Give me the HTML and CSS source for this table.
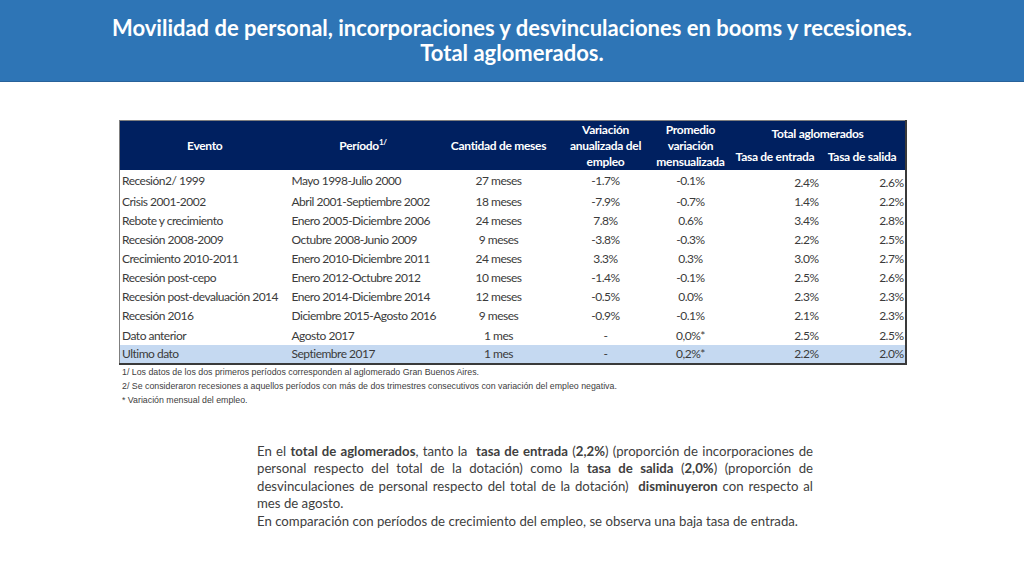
FILE: index.html
```html
<!DOCTYPE html>
<html lang="es">
<head>
<meta charset="utf-8">
<link rel="stylesheet" href="styles.css">
</head>
<body>
<header class="band">
  <h1 class="title">Movilidad de personal, incorporaciones y desvinculaciones en booms y recesiones.<br>Total aglomerados.</h1>
</header>
<main class="content">
  <section class="tablebox">
    <table class="data">
      <colgroup>
        <col class="c1"><col class="c2"><col class="c3"><col class="c4"><col class="c5"><col class="c6"><col class="c7">
      </colgroup>
      <thead>
        <tr class="h1">
          <th rowspan="2">Evento</th>
          <th rowspan="2">Período<sup>1/</sup></th>
          <th rowspan="2">Cantidad de meses</th>
          <th rowspan="2" class="multi">Variación anualizada del empleo</th>
          <th rowspan="2" class="multi">Promedio variación mensualizada</th>
          <th colspan="2" class="grp">Total aglomerados</th>
        </tr>
        <tr class="h2">
          <th class="sub">Tasa de entrada</th>
          <th class="sub">Tasa de salida</th>
        </tr>
      </thead>
      <tbody>
        <tr class="first"><td>Recesión2/ 1999</td><td>Mayo 1998-Julio 2000</td><td class="ctr">27 meses</td><td class="ctr">-1.7%</td><td class="ctr">-0.1%</td><td class="rt low">2.4%</td><td class="rt low">2.6%</td></tr>
        <tr><td>Crisis 2001-2002</td><td>Abril 2001-Septiembre 2002</td><td class="ctr">18 meses</td><td class="ctr">-7.9%</td><td class="ctr">-0.7%</td><td class="rt">1.4%</td><td class="rt">2.2%</td></tr>
        <tr><td>Rebote y crecimiento</td><td>Enero 2005-Diciembre 2006</td><td class="ctr">24 meses</td><td class="ctr">7.8%</td><td class="ctr">0.6%</td><td class="rt">3.4%</td><td class="rt">2.8%</td></tr>
        <tr><td>Recesión 2008-2009</td><td>Octubre 2008-Junio 2009</td><td class="ctr">9 meses</td><td class="ctr">-3.8%</td><td class="ctr">-0.3%</td><td class="rt">2.2%</td><td class="rt">2.5%</td></tr>
        <tr><td>Crecimiento 2010-2011</td><td>Enero 2010-Diciembre 2011</td><td class="ctr">24 meses</td><td class="ctr">3.3%</td><td class="ctr">0.3%</td><td class="rt">3.0%</td><td class="rt">2.7%</td></tr>
        <tr><td>Recesión post-cepo</td><td>Enero 2012-Octubre 2012</td><td class="ctr">10 meses</td><td class="ctr">-1.4%</td><td class="ctr">-0.1%</td><td class="rt">2.5%</td><td class="rt">2.6%</td></tr>
        <tr><td>Recesión post-devaluación 2014</td><td>Enero 2014-Diciembre 2014</td><td class="ctr">12 meses</td><td class="ctr">-0.5%</td><td class="ctr">0.0%</td><td class="rt">2.3%</td><td class="rt">2.3%</td></tr>
        <tr><td>Recesión 2016</td><td>Diciembre 2015-Agosto 2016</td><td class="ctr">9 meses</td><td class="ctr">-0.9%</td><td class="ctr">-0.1%</td><td class="rt">2.1%</td><td class="rt">2.3%</td></tr>
        <tr><td>Dato anterior</td><td>Agosto 2017</td><td class="ctr">1 mes</td><td class="ctr">-</td><td class="ctr">0,0%*</td><td class="rt">2.5%</td><td class="rt">2.5%</td></tr>
        <tr class="last"><td>Ultimo dato</td><td>Septiembre 2017</td><td class="ctr">1 mes</td><td class="ctr">-</td><td class="ctr">0,2%*</td><td class="rt">2.2%</td><td class="rt">2.0%</td></tr>
      </tbody>
    </table>
    <ul class="notes">
      <li>1/ Los datos de los dos primeros períodos corresponden al aglomerado Gran Buenos Aires.</li>
      <li>2/ Se consideraron recesiones a aquellos períodos con más de dos trimestres consecutivos con variación del empleo negativa.</li>
      <li>* Variación mensual del empleo.</li>
    </ul>
  </section>
  <section class="summary">
    <p>En el <b>total de aglomerados</b>, tanto la&nbsp; <b>tasa de entrada</b> (<b>2,2%</b>) (proporción de incorporaciones de personal respecto del total de la dotación) como la <b>tasa de salida</b> (<b>2,0%</b>) (proporción de desvinculaciones de personal respecto del total de la dotación)&nbsp; <b>disminuyeron</b> con respecto al mes de agosto.</p>
    <p>En comparación con períodos de crecimiento del empleo, se observa una baja tasa de entrada.</p>
  </section>
</main>
</body>
</html>
```

FILE: styles.css
```css
html, body {
  margin: 0;
  padding: 0;
  background: #ffffff;
}

body {
  width: 1024px;
  height: 576px;
  overflow: hidden;
  font-family: Lato, "Open Sans", sans-serif;
  color: #3b3b3b;
}

.band {
  height: 82px;
  background: #2e75b6;
  border-bottom: 1px solid #28629a;
  box-sizing: border-box;
  padding-top: 15px;
}

.title {
  margin: 0;
  text-align: center;
  color: #ffffff;
  font-size: 22px;
  line-height: 25px;
  font-weight: 700;
}

.content {
  display: flex;
  flex-direction: column;
  align-items: center;
}

.tablebox {
  margin-top: 38px;
  width: 786px;
}

.data {
  width: 786px;
  border-collapse: collapse;
  table-layout: fixed;
  font-size: 12px;
  letter-spacing: -0.5px;
  border-top: 1px solid #7f7f7f;
  border-left: 1px solid #7f7f7f;
  border-right: 2px solid #3a3a3a;
  border-bottom: 2px solid #3a3a3a;
}

.c1 { width: 170px; }
.c2 { width: 147px; }
.c3 { width: 124px; }
.c4 { width: 90px; }
.c5 { width: 80px; }
.c6 { width: 89px; }
.c7 { width: 86px; }

.data thead th {
  background: #002060;
  color: #ffffff;
  font-weight: 700;
  font-size: 12px;
  letter-spacing: -0.3px;
  line-height: 16px;
  padding: 0 2px;
  text-align: center;
  vertical-align: middle;
}

.data thead sup {
  font-size: 8px;
  line-height: 0;
  vertical-align: 5px;
}

.h1 { height: 25px; }
.h2 { height: 24px; }

.data th.grp {
  padding-top: 2px;
}

.data th.multi {
  padding-top: 1px;
}

.data th.sub {
  padding-bottom: 2px;
}

.data tbody tr {
  height: 19.1px;
}

.data tbody tr.first {
  height: 21.8px;
}

.data td {
  padding: 0 2px 0 2px;
  line-height: 15px;
  white-space: nowrap;
  overflow: hidden;
  vertical-align: middle;
}

.data td.ctr { text-align: center; }
.data td.rt { text-align: right; padding-right: 1px; }
.data td.low { padding-top: 3px; }

.data tr.last td {
  background: #c5d9f1;
}

.notes {
  list-style: none;
  margin: 0;
  padding: 0 0 0 3px;
  font-family: "Liberation Sans", Arial, sans-serif;
  font-size: 8.8px;
  line-height: 14px;
  color: #404040;
}

.summary {
  margin-top: 36px;
  margin-left: 46px;
  width: 556px;
  font-size: 13.2px;
  line-height: 17.6px;
  color: #404040;
  text-align: justify;
}

.summary p {
  margin: 0;
}

.summary b {
  font-weight: 700;
}
```
